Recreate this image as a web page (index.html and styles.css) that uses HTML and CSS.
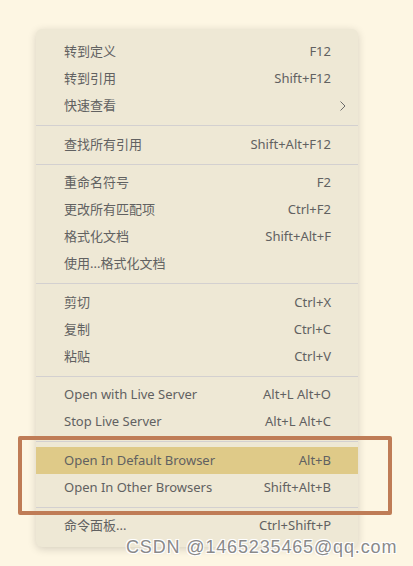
FILE: index.html
```html
<!DOCTYPE html>
<html>
<head>
<meta charset="utf-8">
<link rel="stylesheet" href="styles.css">
</head>
<body>
<div class="page">
  <div class="menu">
    <div class="item"><span class="label">转到定义</span><span class="key">F12</span></div>
    <div class="item"><span class="label">转到引用</span><span class="key">Shift+F12</span></div>
    <div class="item"><span class="label">快速查看</span><span class="chev"><svg width="8" height="12" viewBox="0 0 8 12"><path d="M1.5 1.5 L6 6 L1.5 10.5" fill="none" stroke="#6b6b6b" stroke-width="1"/></svg></span></div>
    <div class="sep"></div>
    <div class="item"><span class="label">查找所有引用</span><span class="key">Shift+Alt+F12</span></div>
    <div class="sep"></div>
    <div class="item"><span class="label">重命名符号</span><span class="key">F2</span></div>
    <div class="item"><span class="label">更改所有匹配项</span><span class="key">Ctrl+F2</span></div>
    <div class="item"><span class="label">格式化文档</span><span class="key">Shift+Alt+F</span></div>
    <div class="item"><span class="label">使用...格式化文档</span><span class="key"></span></div>
    <div class="sep"></div>
    <div class="item"><span class="label">剪切</span><span class="key">Ctrl+X</span></div>
    <div class="item"><span class="label">复制</span><span class="key">Ctrl+C</span></div>
    <div class="item"><span class="label">粘贴</span><span class="key">Ctrl+V</span></div>
    <div class="sep"></div>
    <div class="item"><span class="label">Open with Live Server</span><span class="key">Alt+L Alt+O</span></div>
    <div class="item"><span class="label">Stop Live Server</span><span class="key">Alt+L Alt+C</span></div>
    <div class="sep"></div>
    <div class="item active"><span class="label">Open In Default Browser</span><span class="key">Alt+B</span></div>
    <div class="item"><span class="label">Open In Other Browsers</span><span class="key">Shift+Alt+B</span></div>
    <div class="sep"></div>
    <div class="item"><span class="label">命令面板...</span><span class="key">Ctrl+Shift+P</span></div>
  </div>
  <div class="annot"></div>
  <div class="watermark">CSDN @1465235465@qq.com</div>
</div>
</body>
</html>
```

FILE: styles.css
```css
html, body {
  margin: 0;
  padding: 0;
  background: #fdf6e3;
}
.page {
  position: relative;
  width: 413px;
  height: 566px;
  overflow: hidden;
  padding: 29px 0 0 36px;
  box-sizing: border-box;
}
.menu {
  width: 322px;
  background: #eee8d5;
  border-radius: 6px;
  box-shadow: 0 2px 8px rgba(0, 0, 0, 0.16);
  padding: 9px 0 8px 0;
  box-sizing: border-box;
  font-family: "Noto Sans", "Noto Sans CJK SC", sans-serif;
  font-size: 13px;
  color: #616161;
}
.item {
  height: 27px;
  display: flex;
  align-items: center;
  justify-content: space-between;
  padding: 0 27px 0 28px;
  line-height: 27px;
}
.item.active {
  background: #dfca88;
}
.chev {
  display: flex;
  margin-right: -16px;
}
.sep {
  height: 1px;
  background: #d3d0d0;
  margin: 6px 0 4.5px;
}
.annot {
  position: absolute;
  left: 18px;
  top: 436px;
  width: 374px;
  height: 79px;
  border: 4px solid #bf7c56;
  border-radius: 2px;
  box-sizing: border-box;
}
.watermark {
  position: absolute;
  left: 126px;
  top: 537px;
  font-family: "Liberation Sans", Arial, sans-serif;
  font-size: 18px;
  letter-spacing: 0.85px;
  color: #8a8a8a;
  text-shadow: 1px 1px 0 #fff, -1px -1px 0 #fff, 1px -1px 0 #fff, -1px 1px 0 #fff;
  white-space: nowrap;
}
```
